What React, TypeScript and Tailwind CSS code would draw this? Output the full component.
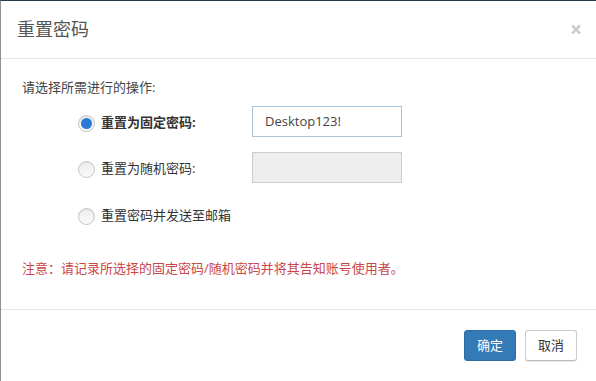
import React from "react";

function Radio({ checked }: { checked?: boolean }) {
  return (
    <span className="flex h-[17px] w-[17px] shrink-0 items-center justify-center rounded-full border border-[#c4c4c4] bg-gradient-to-b from-[#ededed] to-[#fafafa] shadow-[inset_0_1px_1px_rgba(0,0,0,0.06)]">
      {checked && <span className="h-[11px] w-[11px] rounded-full bg-[#2a7ad4]" />}
    </span>
  );
}

export default function App() {
  const font = { fontFamily: '"Open Sans", "Noto Sans CJK SC", sans-serif' } as React.CSSProperties;
  return (
    <div
      className="relative flex h-[381px] w-[596px] flex-col overflow-hidden border-l border-t border-l-[#8f8f8f] border-t-[#2b3a47] bg-white text-[13px] text-[#333]"
      style={font}
    >
      {/* header */}
      <div className="flex h-[58px] shrink-0 items-center justify-between border-b border-[#e5e5e5] pl-[16px] pr-[14px]">
        <div className="pb-[2px] text-[18px] leading-[24px] text-[#555]">重置密码</div>
        <div className="pb-[1px] text-[21px] font-bold leading-none text-[#cbcbcb]">×</div>
      </div>

      {/* body */}
      <div className="flex h-[250px] shrink-0 flex-col pl-[21px] pt-[18px]">
        <div className="leading-[20px] text-[#444]">请选择所需进行的操作:</div>

        <div className="mt-[9px] flex h-[31px] items-center pl-[56px]">
          <div className="flex w-[174px] items-center gap-[6px] pt-[3px]">
            <Radio checked />
            <span className="font-bold text-[#333]">重置为固定密码:</span>
          </div>
          <div className="flex h-[31px] w-[150px] items-center border border-[#a9c4dd] bg-white pl-[12px] text-[13px] text-[#444]">
            Desktop123!
          </div>
        </div>

        <div className="mt-[15px] flex h-[31px] items-center pl-[56px]">
          <div className="flex w-[174px] items-center gap-[6px] pt-[3px]">
            <Radio />
            <span className="text-[#333]">重置为随机密码:</span>
          </div>
          <div className="h-[31px] w-[150px] border border-[#ccc] bg-[#eee]" />
        </div>

        <div className="mt-[16px] flex h-[31px] items-center pl-[56px]">
          <div className="flex items-center gap-[6px] pt-[3px]">
            <Radio />
            <span className="text-[#333]">重置密码并发送至邮箱</span>
          </div>
        </div>

        <div className="mt-[28px] leading-[20px] text-[#c9474a]">
          注意：请记录所选择的固定密码/随机密码并将其告知账号使用者。
        </div>
      </div>

      {/* footer */}
      <div className="flex flex-1 items-start justify-end gap-[9px] border-t border-[#e5e5e5] pr-[19px] pt-[20px]">
        <button className="flex h-[31px] w-[52px] items-center justify-center rounded-[3px] border border-[#2e6da4] bg-[#337ab7] text-[13px] text-white">
          确定
        </button>
        <button className="flex h-[31px] w-[52px] items-center justify-center rounded-[3px] border border-[#ccc] border-b-[#bbb] bg-white text-[13px] text-[#333] shadow-[0_1px_1px_rgba(0,0,0,0.08)]">
          取消
        </button>
      </div>
    </div>
  );
}
